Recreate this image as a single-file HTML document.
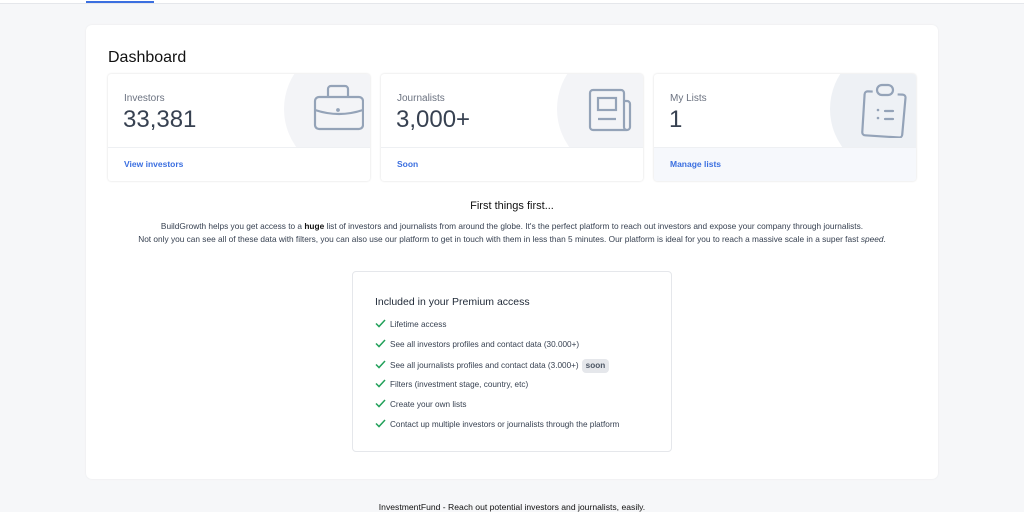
<!DOCTYPE html>
<html><head><style>
*{box-sizing:border-box;margin:0;padding:0}
body{width:1024px;height:512px;overflow:hidden;background:#f6f7f9;font-family:"Liberation Sans",sans-serif;color:#111827;position:relative}
.top{position:absolute;left:0;top:0;width:1024px;height:4px;background:#fff;border-bottom:1px solid #e5e7eb}
.top i{position:absolute;left:86px;top:1px;width:68px;height:2px;background:#3b6fe0}
.main{position:absolute;left:86px;top:25px;width:852px;height:454px;background:#fff;border-radius:6px;box-shadow:0 0 2px rgba(0,0,0,.06)}
h1{position:absolute;left:22px;top:24px;font-size:16px;font-weight:400;color:#111}
.card{position:absolute;top:49px;width:262px;height:107px;background:#fff;border-radius:3px;box-shadow:0 0 2px rgba(0,0,0,.15);overflow:hidden}
.card .up{position:absolute;left:0;top:0;width:100%;height:74px;overflow:hidden;border-bottom:1px solid #eef0f3}
.circ{position:absolute;left:176px;top:-30px;width:130px;height:130px;border-radius:50%;background:#f3f4f7}
.card .lab{position:absolute;left:16px;top:19px;font-size:10px;color:#6b7280}
.card .num{position:absolute;left:15px;top:32px;font-size:24px;color:#374151}
.card .lnk{position:absolute;left:16px;top:85px;font-size:8.5px;font-weight:bold;color:#3b6fe0}
.card svg{position:absolute}
.ft{position:absolute;top:175px;width:852px;text-align:center;font-size:11px;color:#111}
.p{position:absolute;top:195px;width:852px;text-align:center;font-size:8.3px;line-height:13px;color:#374151}
.box{position:absolute;left:266px;top:246px;width:320px;height:181px;border:1px solid #e5e7eb;border-radius:4px}
.box h2{position:absolute;left:22px;top:24px;font-size:10.5px;font-weight:400;color:#1f2937}
.li{position:absolute;left:22px;font-size:8.2px;color:#374151;height:12px;line-height:12px}
.li svg{display:inline-block;vertical-align:-1px;margin-right:4px}
.soon{display:inline-block;background:#e5e7eb;border-radius:4px;padding:0 4px;margin-left:3px;line-height:14px;font-weight:bold;color:#4b5563}
.foot{position:absolute;top:502px;width:1024px;text-align:center;font-size:8.6px;color:#111}
</style></head><body>
<div class="top"><i></i></div>
<div class="main">
<h1>Dashboard</h1>
<div class="card" style="left:22px"><div class="up"><div class="circ"></div>
<svg style="left:204px;top:8px" width="52" height="52" viewBox="0 0 52 52" fill="none" stroke="#94a3b8" stroke-width="2.2"><rect x="3" y="15" width="48" height="32" rx="4"/><path d="M16 15V7a3 3 0 0 1 3-3h14a3 3 0 0 1 3 3v8"/><path d="M3 28q24 8 48 0"/><circle cx="26" cy="28" r=".8" fill="#94a3b8"/></svg>
<div class="lab">Investors</div><div class="num">33,381</div></div><div class="lnk">View investors</div></div>
<div class="card" style="left:295px"><div class="up"><div class="circ"></div>
<svg style="left:206px;top:14px" width="50" height="46" viewBox="0 0 50 46" fill="none" stroke="#94a3b8" stroke-width="2.2"><path d="M40 42H6a3 3 0 0 1-3-3V5a3 3 0 0 1 3-3h28a3 3 0 0 1 3 3v34a3 3 0 0 0 6 0V16a3 3 0 0 0-3-3h-3"/><rect x="11" y="10" width="18" height="12"/><path d="M11 31h18"/></svg>
<div class="lab">Journalists</div><div class="num">3,000+</div></div><div class="lnk">Soon</div></div>
<div class="card" style="left:568px"><div class="up"><div class="circ" style="background:#eef1f5"></div>
<svg style="left:206px;top:8px" width="50" height="56" viewBox="0 0 50 56" fill="none" stroke="#94a3b8" stroke-width="2.2"><path d="M12 10L7 10a3 3 0 0 0-3 3l-1 38a3 3 0 0 0 3 3l34 1a3 3 0 0 0 3-3l2-37a3 3 0 0 0-3-3h-5" transform="rotate(2 25 30)"/><rect x="17" y="3" width="16" height="10" rx="5"/><path d="M18 28h0M18 36h0" stroke-linecap="round" stroke-width="2.6"/><path d="M25 29h8M25 37h8" stroke-linecap="round"/></svg>
<div class="lab">My Lists</div><div class="num">1</div></div>
<div style="position:absolute;left:0;top:74px;width:100%;height:33px;background:#f6f8fc"></div><div class="lnk">Manage lists</div></div>
<div class="ft">First things first...</div>
<div class="p">BuildGrowth helps you get access to a <b style="color:#111">huge</b> list of investors and journalists from around the globe. It's the perfect platform to reach out investors and expose your company through journalists.<br>Not only you can see all of these data with filters, you can also use our platform to get in touch with them in less than 5 minutes. Our platform is ideal for you to reach a massive scale in a super fast <i>speed</i>.</div>
<div class="box"><h2>Included in your Premium access</h2>
<div class="li" style="top:47px"><svg width="11" height="9" viewBox="0 0 11 9" fill="none" stroke="#22a05a" stroke-width="1.5"><path d="M1 4.5l3 3L10 1"/></svg>Lifetime access</div>
<div class="li" style="top:67px"><svg width="11" height="9" viewBox="0 0 11 9" fill="none" stroke="#22a05a" stroke-width="1.5"><path d="M1 4.5l3 3L10 1"/></svg>See all investors profiles and contact data (30.000+)</div>
<div class="li" style="top:87px"><svg width="11" height="9" viewBox="0 0 11 9" fill="none" stroke="#22a05a" stroke-width="1.5"><path d="M1 4.5l3 3L10 1"/></svg>See all journalists profiles and contact data (3.000+)<span class="soon">soon</span></div>
<div class="li" style="top:107px"><svg width="11" height="9" viewBox="0 0 11 9" fill="none" stroke="#22a05a" stroke-width="1.5"><path d="M1 4.5l3 3L10 1"/></svg>Filters (investment stage, country, etc)</div>
<div class="li" style="top:127px"><svg width="11" height="9" viewBox="0 0 11 9" fill="none" stroke="#22a05a" stroke-width="1.5"><path d="M1 4.5l3 3L10 1"/></svg>Create your own lists</div>
<div class="li" style="top:147px"><svg width="11" height="9" viewBox="0 0 11 9" fill="none" stroke="#22a05a" stroke-width="1.5"><path d="M1 4.5l3 3L10 1"/></svg>Contact up multiple investors or journalists through the platform</div>
</div>
</div>
<div class="foot">InvestmentFund - Reach out potential investors and journalists, easily.</div>
</body></html>
